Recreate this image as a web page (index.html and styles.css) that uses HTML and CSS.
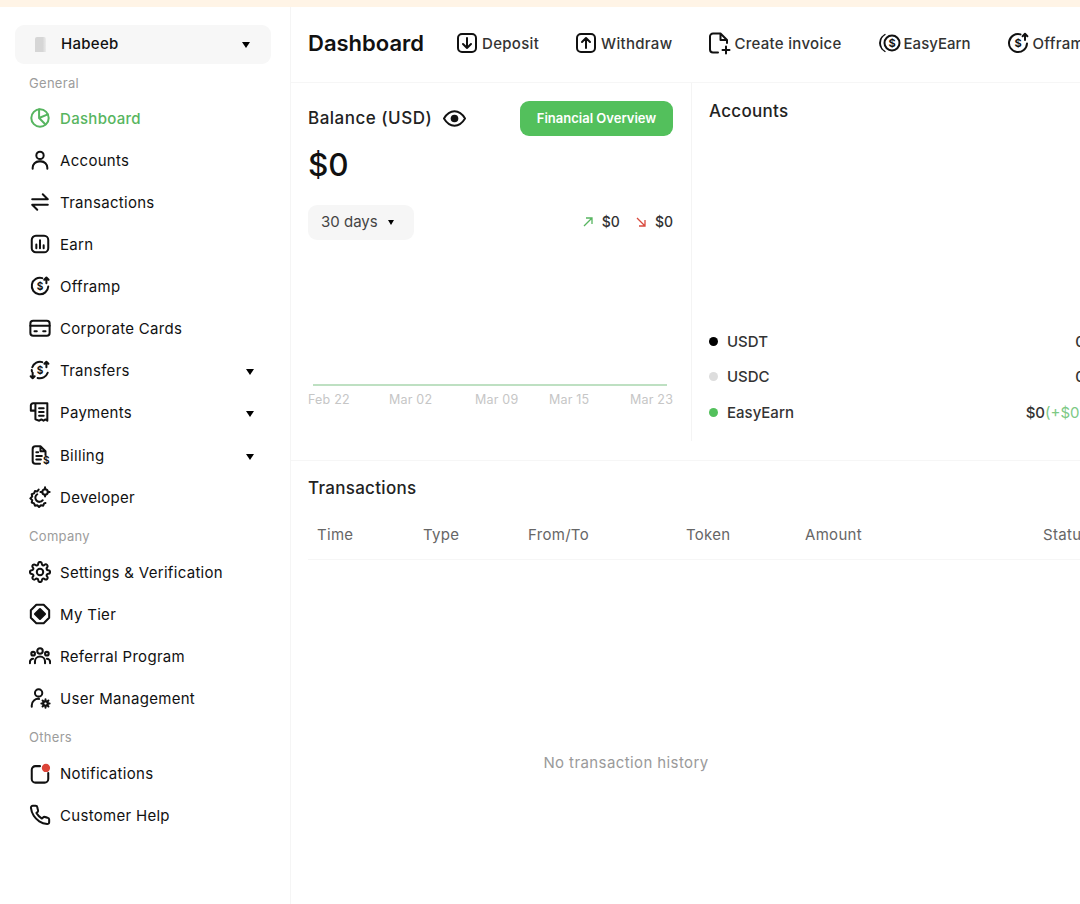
FILE: index.html
```html
<!DOCTYPE html>
<html lang="en">

<head>
    <meta charset="UTF-8">
    <meta name="viewport" content="width=device-width, initial-scale=1.0">
    <title>Dashboard</title>
    <link rel="stylesheet" href="styles.css">
</head>

<body>
    <!-- Shared icons -->
    <svg class="sprite" xmlns="http://www.w3.org/2000/svg">
        <symbol id="i-offramp" viewBox="0 0 24 24">
            <path d="M14.500 3.400A9 9 0 1 0 21 12.500" />
            <path d="M19 9V3M16.600 5.200 19 2.800l2.400 2.400" />
            <text x="12" y="16.400" class="icon-text">$</text>
        </symbol>
        <symbol id="i-arrow-box" viewBox="0 0 24 24">
            <rect x="3" y="3" width="18" height="18" rx="4" />
            <path d="M12 7v10M8 13l4 4 4-4" />
        </symbol>
    </svg>

    <div class="top-strip"></div>

    <div class="layout">
        <!-- Sidebar -->
        <aside class="sidebar">
            <div class="account-select">
                <span class="building"></span>
                <span class="account-name">Habeeb</span>
                <span class="caret"></span>
            </div>

            <div class="nav-label">General</div>
            <a class="nav-item active">
                <svg class="icon" viewBox="0 0 24 24"><circle cx="12" cy="12" r="9.500" /><path d="M11 2.500V12l7 7M11 12l9.500-4" /></svg>
                Dashboard
            </a>
            <a class="nav-item">
                <svg class="icon" viewBox="0 0 24 24"><circle cx="12" cy="7" r="4" /><path d="M4 21.500v-1a7 7 0 0 1 7-7h2a7 7 0 0 1 7 7v1" /></svg>
                Accounts
            </a>
            <a class="nav-item">
                <svg class="icon" viewBox="0 0 24 24"><path d="M3.500 9h17L15 3.500M20.500 15h-17L9 20.500" /></svg>
                Transactions
            </a>
            <a class="nav-item">
                <svg class="icon" viewBox="0 0 24 24"><rect x="3" y="3" width="18" height="18" rx="4.500" /><path d="M8 12.500v4M12 8v8.500M16 13.500v3" /></svg>
                Earn
            </a>
            <a class="nav-item">
                <svg class="icon"><use href="#i-offramp" /></svg>
                Offramp
            </a>
            <a class="nav-item">
                <svg class="icon" viewBox="0 0 24 24"><rect x="1.500" y="4" width="21" height="16.500" rx="3" /><path d="M1.500 9.500h21M6 15.500h2.500M15.500 15.500H18" /></svg>
                Corporate Cards
            </a>
            <a class="nav-item">
                <svg class="icon" viewBox="0 0 24 24"><path d="M14.500 3.400A9 9 0 0 0 3.600 9M20.400 15a9 9 0 0 1-11 5.700M3.200 13.500 3 12" /><path d="M19 9V3M16.800 5.200 19 3l2.200 2.200M4 15v6M1.800 18.800 4 21l2.200-2.200" /><text x="12" y="16.400" class="icon-text">$</text></svg>
                Transfers
                <span class="caret"></span>
            </a>
            <a class="nav-item">
                <svg class="icon" viewBox="0 0 24 24"><path d="M7 2.500h13v19l-2-1.400-2.200 1.400-2.300-1.400-2.300 1.400L7 20V2.500zM7 2.500H4.500A2.500 2.500 0 0 0 2 5v5.500h5M11 8h5M11 12h5M11 16h5" /></svg>
                Payments
                <span class="caret"></span>
            </a>
            <a class="nav-item billing">
                <svg class="icon" viewBox="0 0 24 24"><path d="M18 12V8l-5.500-5.500H7A3 3 0 0 0 4 5.500v13a3 3 0 0 0 3 3h5M12.500 2.500V8H18M8 9h2M8 13h6M8 17h5" /><text x="19" y="22" class="icon-text">$</text></svg>
                Billing
                <span class="caret"></span>
            </a>
            <a class="nav-item">
                <svg class="icon" viewBox="0 0 24 24"><path d="M10.500 4 9 6 6.500 5.500l-1 2.500L3 9l.5 2.500-2 2 2 2L3 18l2.500 1 1 2.500L9 21l2 2 2-2 2.500.5 1-2.500 1.500-.5" /><path d="M15 15.500a4.500 4.500 0 1 1-6-6.500" /><circle cx="17.500" cy="6.500" r="3" /><path d="M17.500 1.500v2M17.500 9.500v2M12.500 6.500h2M20.500 6.500h2" /></svg>
                Developer
            </a>

            <div class="nav-label company">Company</div>
            <a class="nav-item">
                <svg class="icon" viewBox="0 0 24 24"><circle cx="12" cy="12" r="3.500" /><path d="M19.400 15a1.650 1.650 0 0 0 .33 1.820l.06.06a2 2 0 0 1 0 2.830 2 2 0 0 1-2.830 0l-.06-.06a1.650 1.650 0 0 0-1.820-.33 1.650 1.650 0 0 0-1 1.510V21a2 2 0 0 1-2 2 2 2 0 0 1-2-2v-.09A1.650 1.650 0 0 0 9 19.400a1.650 1.650 0 0 0-1.820.33l-.06.06a2 2 0 0 1-2.830 0 2 2 0 0 1 0-2.830l.06-.06a1.650 1.650 0 0 0 .33-1.820 1.650 1.650 0 0 0-1.510-1H3a2 2 0 0 1-2-2 2 2 0 0 1 2-2h.09A1.650 1.650 0 0 0 4.600 9a1.650 1.650 0 0 0-.33-1.820l-.06-.06a2 2 0 0 1 0-2.830 2 2 0 0 1 2.830 0l.06.06a1.650 1.650 0 0 0 1.820.33H9a1.650 1.650 0 0 0 1-1.510V3a2 2 0 0 1 2-2 2 2 0 0 1 2 2v.09a1.650 1.650 0 0 0 1 1.510 1.650 1.650 0 0 0 1.820-.33l.06-.06a2 2 0 0 1 2.830 0 2 2 0 0 1 0 2.830l-.06.06a1.650 1.650 0 0 0-.33 1.820V9a1.650 1.650 0 0 0 1.510 1H21a2 2 0 0 1 2 2 2 2 0 0 1-2 2h-.09a1.650 1.650 0 0 0-1.510 1z" /></svg>
                Settings &amp; Verification
            </a>
            <a class="nav-item">
                <svg class="icon" viewBox="0 0 24 24"><path d="M8 2h8l6 6v8l-6 6H8l-6-6V8z" /><path class="fill" d="M12 6.500 17.500 12 12 17.500 6.500 12z" /></svg>
                My Tier
            </a>
            <a class="nav-item">
                <svg class="icon" viewBox="0 0 24 24"><circle cx="12" cy="6.500" r="3" /><circle cx="4.500" cy="9.500" r="2" /><circle cx="19.500" cy="9.500" r="2" /><path d="M6.500 20v-2a5.500 5.500 0 0 1 11 0v2M1 20v-1.500A3.500 3.500 0 0 1 4.500 15M23 20v-1.500a3.500 3.500 0 0 0-3.500-3.500" /></svg>
                Referral Program
            </a>
            <a class="nav-item">
                <svg class="icon" viewBox="0 0 24 24"><circle cx="10.500" cy="6.500" r="4" /><path d="M3 21.500V20a7 7 0 0 1 8-7" /><circle cx="18" cy="18" r="2.500" /><path d="M18 13.500v2M18 20.500v2M13.500 18h2M20.500 18h2M14.800 14.800l1.400 1.400M19.800 19.800l1.400 1.400M14.800 21.200l1.400-1.400M19.800 16.200l1.400-1.400" /></svg>
                User Management
            </a>

            <div class="nav-label others">Others</div>
            <a class="nav-item">
                <svg class="icon" viewBox="0 0 24 24"><path d="M12 4.500H7a4 4 0 0 0-4 4v10a4 4 0 0 0 4 4h10a4 4 0 0 0 4-4V12" /><circle class="dot" cx="18.500" cy="6.500" r="4.500" /></svg>
                Notifications
            </a>
            <a class="nav-item">
                <svg class="icon" viewBox="0 0 24 24"><path d="M22 16.920v3a2 2 0 0 1-2.180 2 19.790 19.790 0 0 1-8.630-3.070 19.500 19.500 0 0 1-6-6 19.790 19.790 0 0 1-3.070-8.670A2 2 0 0 1 4.110 2h3a2 2 0 0 1 2 1.720 12.840 12.840 0 0 0 .7 2.810 2 2 0 0 1-.45 2.110L8.090 9.910a16 16 0 0 0 6 6l1.270-1.270a2 2 0 0 1 2.110-.45 12.840 12.840 0 0 0 2.810.7A2 2 0 0 1 22 16.920z" /></svg>
                Customer Help
            </a>
        </aside>

        <!-- Main -->
        <main class="main">
            <header class="page-header">
                <h1>Dashboard</h1>
                <a class="action"><svg class="icon"><use href="#i-arrow-box" /></svg>Deposit</a>
                <a class="action"><svg class="icon flip"><use href="#i-arrow-box" /></svg>Withdraw</a>
                <a class="action">
                    <svg class="icon" viewBox="0 0 24 24"><path d="M11 21.500H6a3 3 0 0 1-3-3v-13a3 3 0 0 1 3-3h7.500L20 9v3M13.500 2.500V9H20M19 15.500v7M15.500 19h7" /></svg>
                    Create invoice
                </a>
                <a class="action tight">
                    <svg class="icon" viewBox="0 0 24 24"><circle cx="15" cy="12" r="7.500" /><path stroke-width="1.400" d="M8 3.500a10 10 0 0 0 0 17M5 6a9 9 0 0 0 0 12" /><text x="15" y="16" class="icon-text">$</text></svg>
                    EasyEarn
                </a>
                <a class="action"><svg class="icon"><use href="#i-offramp" /></svg>Offramp</a>
            </header>

            <section class="overview">
                <div class="balance">
                    <div class="balance-top">
                        <span class="balance-title">Balance (USD)</span>
                        <svg class="eye" viewBox="0 0 24 24"><path d="M1 12c3-5 6.500-7.500 11-7.500S20 7 23 12c-3 5-6.500 7.500-11 7.500S4 17 1 12z" /><circle class="fill" cx="12" cy="12" r="4" /></svg>
                        <button class="overview-btn">Financial Overview</button>
                    </div>
                    <div class="balance-amount">$0</div>
                    <div class="balance-filter">
                        <span class="days">30 days <span class="caret small"></span></span>
                        <span class="flows">
                            <svg class="arrow in" viewBox="0 0 12 12"><path d="M2 10 10 2M4 2h6v6" /></svg>
                            <span class="flow-val">$0</span>
                            <svg class="arrow out" viewBox="0 0 12 12"><path d="M2 2l8 8M10 4v6H4" /></svg>
                            <span class="flow-val">$0</span>
                        </span>
                    </div>
                    <svg class="chart" viewBox="0 0 365 40" width="365" height="40">
                        <line x1="5" y1="8" x2="359" y2="8" />
                        <text x="0" y="27">Feb 22</text>
                        <text x="81" y="27">Mar 02</text>
                        <text x="167" y="27">Mar 09</text>
                        <text x="241" y="27">Mar 15</text>
                        <text x="322" y="27">Mar 23</text>
                    </svg>
                </div>

                <div class="accounts">
                    <h2>Accounts</h2>
                    <ul class="legend">
                        <li><span class="dot black"></span>USDT<span class="value">0</span></li>
                        <li><span class="dot grey"></span>USDC<span class="value">0</span></li>
                        <li><span class="dot green"></span>EasyEarn<span class="value">$0<span class="gain">(+$0)</span></span></li>
                    </ul>
                </div>
            </section>

            <section class="transactions">
                <h2>Transactions</h2>
                <div class="table-head">
                    <span>Time</span>
                    <span>Type</span>
                    <span>From/To</span>
                    <span>Token</span>
                    <span>Amount</span>
                    <span>Status</span>
                </div>
                <div class="empty">No transaction history</div>
            </section>
        </main>
    </div>
</body>

</html>
```

FILE: styles.css
```css
* {
    box-sizing: border-box;
}

body {
    font-family: Inter, "Noto Sans", sans-serif;
    margin: 0;
    width: 1080px;
    height: 904px;
    overflow: hidden;
    background: #fff;
    color: #111;
    letter-spacing: 0.3px;
}

.sprite {
    display: none;
}

.top-strip {
    height: 7px;
    background: #fff4e6;
}

.layout {
    display: flex;
    width: 1120px;
    height: 897px;
}

/* Icons */
.icon {
    width: 22px;
    height: 22px;
    flex-shrink: 0;
    fill: none;
    stroke: currentColor;
    stroke-width: 2.200;
    stroke-linecap: round;
    stroke-linejoin: round;
}

.icon .fill {
    fill: currentColor;
}

.icon .dot {
    fill: #dc4438;
    stroke: none;
}

.icon-text {
    font-family: Inter, sans-serif;
    font-size: 11px;
    font-weight: 700;
    letter-spacing: 0;
    text-anchor: middle;
    fill: currentColor;
    stroke: none;
}

.flip {
    transform: scaleY(-1);
}

.caret {
    width: 0;
    height: 0;
    margin-top: 2px;
    border-left: 4.500px solid transparent;
    border-right: 4.500px solid transparent;
    border-top: 6px solid #000;
}

.caret.small {
    display: inline-block;
    border-left-width: 3.500px;
    border-right-width: 3.500px;
    border-top-width: 5px;
    margin: 2px 0 0 10px;
}

/* Sidebar */
.sidebar {
    width: 291px;
    flex-shrink: 0;
    padding: 18px 19px 0 15px;
    border-right: 1px solid #f5f5f5;
}

.account-select {
    display: flex;
    align-items: center;
    height: 39px;
    padding: 0 21px 2px 20px;
    background: #f7f7f7;
    border-radius: 9px;
    font-size: 15px;
    font-weight: 500;
}

.building {
    width: 11px;
    height: 15px;
    margin: 2px 15px 0 0;
    background: linear-gradient(to right, #d6d6d6 70%, #ececec);
    border-radius: 2px 2px 0 0;
}

.account-name {
    flex: 1;
}

.nav-label {
    height: 20px;
    margin: 9px 0 4px 14px;
    font-size: 13px;
    line-height: 20px;
    color: #9c9c9c;
}

.nav-label.company {
    margin-top: 8px;
    margin-bottom: 5px;
}

.nav-label.others {
    margin-top: 8px;
    margin-bottom: 5px;
}

.nav-item {
    display: flex;
    align-items: center;
    gap: 9px;
    height: 42px;
    padding: 0 17px 0 14px;
    font-size: 15px;
    color: #111;
}

.nav-item.billing {
    margin-top: 1px;
}

.nav-item.active {
    color: #57b560;
    font-weight: 500;
}

.nav-item .caret {
    margin-top: 3px;
    margin-left: auto;
}

/* Header */
.main {
    flex: 1;
    min-width: 0;
}

.page-header {
    display: flex;
    align-items: center;
    height: 76px;
    padding: 0 0 3px 17px;
    border-bottom: 1px solid #f6f6f6;
    white-space: nowrap;
}

h1 {
    margin: 0 31px 0 0;
    font-size: 22px;
    font-weight: 600;
    letter-spacing: 0;
}

.action {
    display: flex;
    align-items: center;
    gap: 3px;
    margin-right: 35px;
    font-size: 15px;
    font-weight: 500;
    color: #333;
}

.action.tight {
    letter-spacing: 0;
}

.action .icon {
    width: 24px;
    height: 24px;
    color: #111;
    stroke-width: 2;
}

/* Balance and accounts */
.overview {
    display: flex;
    height: 378px;
    border-bottom: 1px solid #f6f6f6;
}

.balance {
    width: 401px;
    height: 358px;
    padding: 17px 18px 0 17px;
    border-right: 1px solid #f4f4f4;
}

.balance-top {
    display: flex;
    align-items: center;
    height: 36px;
}

.balance-title {
    font-size: 17px;
    font-weight: 500;
    color: #222;
    letter-spacing: 0.5px;
}

.eye {
    width: 23px;
    height: 23px;
    margin-left: 11px;
    fill: none;
    stroke: #111;
    stroke-width: 2;
}

.eye .fill {
    fill: #111;
    stroke: none;
}

.overview-btn {
    margin-left: auto;
    width: 153px;
    height: 35px;
    padding: 0;
    border: 0;
    border-radius: 9px;
    background: #53c05c;
    color: #fff;
    font-family: inherit;
    font-size: 13px;
    font-weight: 600;
    letter-spacing: 0;
}

.balance-amount {
    margin-top: 10px;
    font-size: 31.500px;
    font-weight: 500;
    line-height: 38px;
    letter-spacing: 0;
}

.balance-filter {
    display: flex;
    align-items: center;
    justify-content: space-between;
    margin-top: 21px;
}

.days {
    display: flex;
    align-items: center;
    width: 106px;
    height: 35px;
    padding: 0 0 3px 13px;
    background: #f6f6f6;
    border-radius: 9px;
    font-size: 15px;
    color: #444;
    letter-spacing: 0;
}

.flows {
    display: flex;
    align-items: center;
    margin-bottom: 2px;
    font-size: 14px;
    font-weight: 500;
    color: #333;
    letter-spacing: 0;
}

.arrow {
    width: 12px;
    height: 12px;
    fill: none;
    stroke-width: 1.300;
}

.arrow.in {
    stroke: #57b560;
    margin-right: 8px;
}

.arrow.out {
    stroke: #d9493d;
    margin: 0 8px 0 15px;
}

.chart {
    display: block;
    margin-top: 137px;
}

.chart line {
    stroke: #a9d6ae;
    stroke-width: 1.500;
}

.chart text {
    font-family: Inter, sans-serif;
    font-size: 12.500px;
    letter-spacing: 0.2px;
    fill: #c6c6c6;
}

.accounts {
    flex: 1;
    padding: 17px 0 0 17px;
    margin-right: 35px;
}

h2 {
    margin: 0;
    font-size: 17px;
    font-weight: 500;
    color: #222;
}

.accounts h2 {
    line-height: 22px;
}

.legend {
    list-style: none;
    margin: 201.500px 0 0;
    padding: 0;
}

.legend li {
    display: flex;
    align-items: center;
    height: 35.500px;
    font-size: 15px;
    font-weight: 500;
    color: #333;
    letter-spacing: 0;
}

.dot {
    width: 9px;
    height: 9px;
    margin-right: 9px;
    border-radius: 50%;
}

.dot.black {
    background: #000;
}

.dot.grey {
    background: #ddd;
}

.dot.green {
    background: #53c05c;
}

.value {
    margin-left: auto;
}

.gain {
    color: #7cc984;
    font-weight: 400;
}

/* Transactions */
.transactions {
    padding: 16px 0 0 17px;
}

.transactions h2 {
    line-height: 22px;
}

.table-head {
    display: grid;
    grid-template-columns: 106px 105px 158px 119px 238px 1fr;
    align-items: center;
    height: 50px;
    margin-top: 11px;
    padding-left: 9px;
    border-bottom: 1px solid #f6f6f6;
    font-size: 15px;
    color: #666;
}

.empty {
    width: 636px;
    padding-top: 193px;
    text-align: center;
    font-size: 15px;
    color: #9a9a9a;
    letter-spacing: 0.4px;
}
```
